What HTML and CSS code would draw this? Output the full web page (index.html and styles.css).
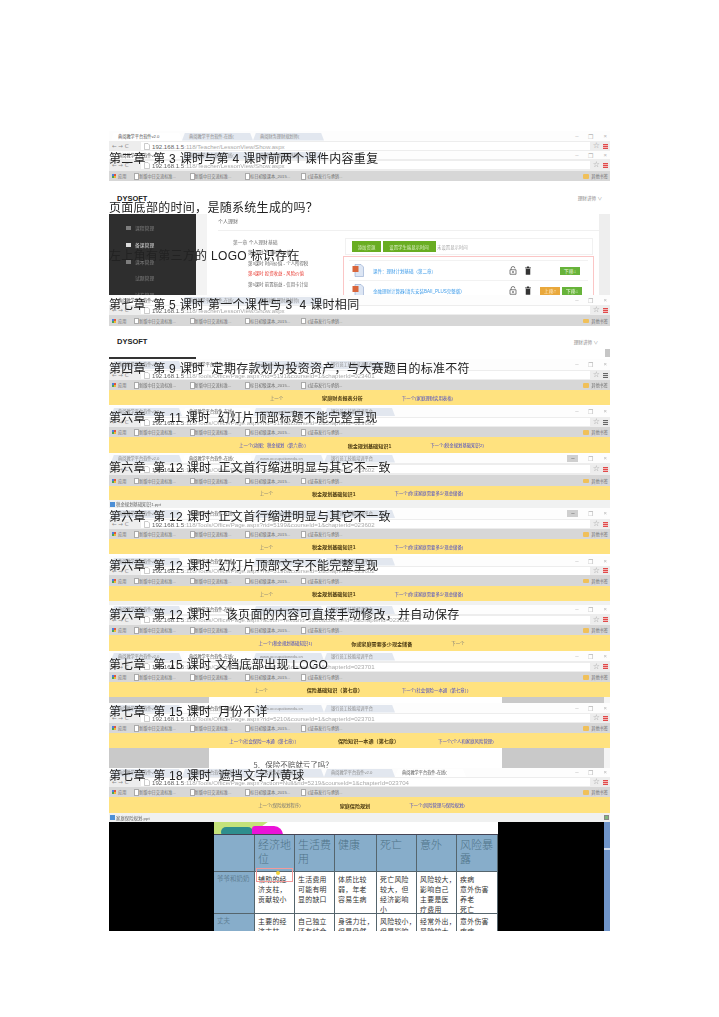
FILE: index.html
```html
<!DOCTYPE html>
<html lang="zh-CN">
<head>
<meta charset="utf-8">
<title>课件问题记录</title>
<link rel="stylesheet" href="styles.css">
</head>
<body>
<svg class="defs" aria-hidden="true">
  <symbol id="lock" viewBox="0 0 10 12"><path d="M2.5 5V3.2a2.5 2.5 0 0 1 5 0M1 5h8v6H1z" fill="none" stroke="#555" stroke-width="1"/><rect x="4" y="7" width="2" height="2" fill="#555"/></symbol>
  <symbol id="trash" viewBox="0 0 10 12"><path d="M1 2h8v1H1zM3.5 0.5h3V2h-3zM2 3.5h6V11.5H2z" fill="#333"/></symbol>
  <symbol id="ppt" viewBox="0 0 12 13"><path d="M3 .5h6l2.5 2.5v9.5H3z" fill="#dde6f4" stroke="#8fa6cc" stroke-width=".6"/><rect x=".5" y="2" width="6" height="6" fill="#d9663c"/></symbol>
  <symbol id="file" viewBox="0 0 6 7"><path d="M.5.5h3.5l1.500 1.500v4.500H.5z" fill="#fff" stroke="#aaa" stroke-width=".6"/></symbol>
</svg>
<main class="sheet">
  <div class="shots">

    <section class="tabs">
      <span class="tab on">典阅教学平台软件v2.0</span><span class="tab">典阅教学平台软件-在线(</span><span class="tab">典阅财务理财规划师(</span>
      <span class="winbtns"><i>–</i><i>❐</i><i>×</i></span>
    </section>
    <section class="url"><span class="arrows">← → C</span><span class="field"><svg class="doc"><use href="#file"/></svg><b>192.168.1.5</b>:118/Teacher/LessonView/Show.aspx</span><span class="star">☆</span><span class="menu"></span></section>

    <section class="tabs t8">
      <span class="tab on">典阅教学平台软件v2.0</span><span class="tab">典阅教学平台软件-在线(</span><span class="tab">典阅财务理财规划师(</span>
      <span class="winbtns"><i>–</i><i>❐</i><i>×</i></span>
    </section>
    <section class="url u12"><span class="arrows">← → C</span><span class="field"><svg class="doc"><use href="#file"/></svg><b>192.168.1.5</b>:118/Teacher/LessonView/Show.aspx</span><span class="star">☆</span><span class="menu"></span></section>
    <section class="marks"><span class="apps"></span><span class="apptxt">应用</span><span class="mk">新版中日交流标准...</span><span class="mk">新版中日交流标准...</span><span class="mk">标日初级课本_2015...</span><span class="mk">《证券发行与承销...</span><span class="folder">其他书签</span></section>

    <header class="brand b33"><strong>DYSOFT</strong><span>理财讲师 ∨</span></header>

    <section class="panel">
      <nav class="side">
        <p><i class="ico"></i>课程管理</p>
        <p class="cur"><i class="ico"></i>备课管理</p>
        <p><i class="ico"></i>课本管理</p>
        <p class="sub">试题管理</p>
        <p class="sub">试卷管理</p>
      </nav>
      <div class="gut"></div>
      <div class="work">
        <h2>个人理财</h2>
        <div class="cols">
          <ul class="tree">
            <li class="ch">第一章 个人理财基础</li>
            <li>第2课时 货币时间价值</li>
            <li>第3课时 时间价值 - 个人所得税</li>
            <li class="red">第4课时 投资收益 - 风险价值</li>
            <li>第5课时 前置损益 - 信用卡计息</li>
          </ul>
          <div class="res">
            <div class="acts"><button class="bt1">添加资源</button><button class="bt2">设置学生端显示时间</button><em>未设置显示时间</em></div>
            <div class="redbox">
              <div class="row"><svg class="pi"><use href="#ppt"/></svg><a>课件：理财计划基础（第二章）</a><span class="ops"><svg><use href="#lock"/></svg><svg><use href="#trash"/></svg></span><span class="spot"></span><span class="gb">下移↓</span></div>
              <div class="row"><svg class="pi"><use href="#ppt"/></svg><a>金融理财计算器(请先安装BAII_PLUS完整版)</a><span class="ops"><svg><use href="#lock"/></svg><svg><use href="#trash"/></svg></span><span class="ob">上移↑</span><span class="gb">下移↓</span></div>
            </div>
          </div>
        </div>
      </div>
      <div class="gut gr"></div>
    </section>

    <section class="tabs">
      <span class="tab on">典阅教学平台软件v2.0</span><span class="tab">典阅教学平台软件-在线(</span><span class="tab">典阅财务理财规划师(</span>
      <span class="winbtns"><i>–</i><i>❐</i><i>×</i></span>
    </section>
    <section class="url"><span class="arrows">← → C</span><span class="field"><svg class="doc"><use href="#file"/></svg><b>192.168.1.5</b>:118/Teacher/LessonView/Show.aspx</span><span class="star">☆</span><span class="menu"></span></section>
    <section class="marks m11"><span class="apps"></span><span class="apptxt">应用</span><span class="mk">新版中日交流标准...</span><span class="mk">新版中日交流标准...</span><span class="mk">标日初级课本_2015...</span><span class="mk">《证券发行与承销...</span><span class="folder">其他书签</span></section>

    <header class="brand b31 scroll"><strong>DYSOFT</strong><span>理财讲师 ∨</span><i class="thumb"></i></header>
    <div class="darkline"></div>

    <section class="tabs t11">
      <span class="tab">典阅教学平台软件v2.0</span><span class="tab on">典阅教学平台软件-在线(</span><span class="tab">www.occupationedu.cn</span><span class="tab">银行员工技能培训平台</span>
      <span class="winbtns"><i>–</i><i>❐</i><i>×</i></span>
    </section>
    <section class="url"><span class="arrows">← → C</span><span class="field"><svg class="doc"><use href="#file"/></svg><b>192.168.1.5</b>:118/Tools/Office/Page.aspx?rid=5191&amp;courseId=1&amp;chapterId=023401</span><span class="star">☆</span><span class="menu grey"></span></section>
    <section class="marks"><span class="apps"></span><span class="apptxt">应用</span><span class="mk">新版中日交流标准...</span><span class="mk">新版中日交流标准...</span><span class="mk">标日初级课本_2015...</span><span class="mk">《证券发行与承销...</span><span class="folder">其他书签</span></section>
    <section class="nav"><a>上一个</a><b>家庭财务报表分析</b><a class="next">下一个(家庭理财实用表格)</a></section>
    <div class="slit"></div>

    <section class="tabs t11">
      <span class="tab">典阅教学平台软件v2.0</span><span class="tab on">典阅教学平台软件-在线(</span><span class="tab">www.occupationedu.cn</span><span class="tab">银行员工技能培训平台</span>
      <span class="winbtns"><i>–</i><i>❐</i><i>×</i></span>
    </section>
    <section class="url"><span class="arrows">← → C</span><span class="field"><svg class="doc"><use href="#file"/></svg><b>192.168.1.5</b>:118/Tools/Office/Page.aspx?rid=5196&amp;courseId=1&amp;chapterId=023601</span><span class="star">☆</span><span class="menu grey"></span></section>
    <section class="marks"><span class="apps"></span><span class="apptxt">应用</span><span class="mk">新版中日交流标准...</span><span class="mk">新版中日交流标准...</span><span class="mk">标日初级课本_2015...</span><span class="mk">《证券发行与承销...</span><span class="folder">其他书签</span></section>
    <section class="nav n16"><a class="next">上一个(动图：税金规划（第六章））</a><b>税金规划基础知识1</b><a class="next">下一个(税金规划基础知识2)</a></section>

    <section class="tabs">
      <span class="tab">典阅教学平台软件v2.0</span><span class="tab on">典阅教学平台软件-在线(</span><span class="tab">www.occupationedu.cn</span><span class="tab">银行员工技能培训平台</span>
      <span class="winbtns dark"><i>–</i><i>❐</i><i>×</i></span>
    </section>
    <section class="url u12"><span class="arrows">← → C</span><span class="field"><svg class="doc"><use href="#file"/></svg><b>192.168.1.5</b>:118/Tools/Office/Page.aspx?rid=5197&amp;courseId=1&amp;chapterId=023602</span><span class="star">☆</span><span class="menu"></span></section>
    <section class="marks m11"><span class="apps"></span><span class="apptxt">应用</span><span class="mk">新版中日交流标准...</span><span class="mk">新版中日交流标准...</span><span class="mk">标日初级课本_2015...</span><span class="mk">《证券发行与承销...</span><span class="folder">其他书签</span></section>
    <section class="nav n14"><a>上一个</a><b>税金规划基础知识1</b><a class="next">下一个(你或家庭需要多少现金储备)</a></section>
    <section class="filebar"><i class="pp"></i>税金规划基础知识1.ppt</section>

    <section class="tabs t11">
      <span class="tab">典阅教学平台软件v2.0</span><span class="tab on">典阅教学平台软件-在线(</span><span class="tab">www.occupationedu.cn</span><span class="tab">银行员工技能培训平台</span>
      <span class="winbtns dark"><i>–</i><i>❐</i><i>×</i></span>
    </section>
    <section class="url"><span class="arrows">← → C</span><span class="field"><svg class="doc"><use href="#file"/></svg><b>192.168.1.5</b>:118/Tools/Office/Page.aspx?rid=5199&amp;courseId=1&amp;chapterId=023602</span><span class="star">☆</span><span class="menu"></span></section>
    <section class="marks"><span class="apps"></span><span class="apptxt">应用</span><span class="mk">新版中日交流标准...</span><span class="mk">新版中日交流标准...</span><span class="mk">标日初级课本_2015...</span><span class="mk">《证券发行与承销...</span><span class="folder">其他书签</span></section>
    <section class="nav"><a>上一个</a><b>税金规划基础知识1</b><a class="next">下一个(你或家庭需要多少现金储备)</a></section>
    <div class="slit s2"></div>

    <section class="tabs">
      <span class="tab">典阅教学平台软件v2.0</span><span class="tab on">典阅教学平台软件-在线(</span><span class="tab">www.occupationedu.cn</span><span class="tab">银行员工技能培训平台</span>
      <span class="winbtns"><i>–</i><i>❐</i><i>×</i></span>
    </section>
    <section class="url u9"><span class="arrows">← → C</span><span class="field"><svg class="doc"><use href="#file"/></svg><b>192.168.1.5</b>:118/Tools/Office/Page.aspx?rid=5198&amp;courseId=1&amp;chapterId=023602</span><span class="star">☆</span><span class="menu"></span></section>
    <section class="marks m11"><span class="apps"></span><span class="apptxt">应用</span><span class="mk">新版中日交流标准...</span><span class="mk">新版中日交流标准...</span><span class="mk">标日初级课本_2015...</span><span class="mk">《证券发行与承销...</span><span class="folder">其他书签</span></section>
    <section class="nav"><a>上一个</a><b>税金规划基础知识1</b><a class="next">下一个(你或家庭需要多少现金储备)</a></section>
    <section class="filebar f4"></section>

    <section class="tabs t9">
      <span class="tab">典阅教学平台软件v2.0</span><span class="tab on">典阅教学平台软件-在线(</span><span class="tab">www.occupationedu.cn</span><span class="tab">银行员工技能培训平台</span>
      <span class="winbtns"><i>–</i><i>❐</i><i>×</i></span>
    </section>
    <section class="url u11"><span class="arrows">← → C</span><span class="field"><svg class="doc"><use href="#file"/></svg><b>192.168.1.5</b>:118/Tools/Office/Page.aspx?action=Text&amp;rid=5200&amp;courseId=1&amp;chapterId=023602</span><span class="star">☆</span><span class="menu"></span></section>
    <section class="marks"><span class="apps"></span><span class="apptxt">应用</span><span class="mk">新版中日交流标准...</span><span class="mk">新版中日交流标准...</span><span class="mk">标日初级课本_2015...</span><span class="mk">《证券发行与承销...</span><span class="folder">其他书签</span></section>
    <section class="nav n16"><a class="next">上一个(税金规划基础知识1)</a><b>你或家庭需要多少现金储备</b><a>下一个</a></section>

    <section class="tabs">
      <span class="tab">典阅教学平台软件v2.0</span><span class="tab on">典阅教学平台软件-在线(</span><span class="tab">www.occupationedu.cn</span><span class="tab">银行员工技能培训平台</span>
      <span class="winbtns"><i>–</i><i>❐</i><i>×</i></span>
    </section>
    <section class="url u11"><span class="arrows">← → C</span><span class="field"><svg class="doc"><use href="#file"/></svg><b>192.168.1.5</b>:118/Tools/Office/Page.aspx?rid=5206&amp;courseId=1&amp;chapterId=023701</span><span class="star">☆</span><span class="menu"></span></section>
    <section class="marks"><span class="apps"></span><span class="apptxt">应用</span><span class="mk">新版中日交流标准...</span><span class="mk">新版中日交流标准...</span><span class="mk">标日初级课本_2015...</span><span class="mk">《证券发行与承销...</span><span class="folder">其他书签</span></section>
    <section class="nav"><a>上一个</a><b>保险基础知识（第七章）</b><a class="next">下一个(社会保险一本通（第七章）)</a></section>
    <div class="gutter g6"><div class="leaf"></div></div>

    <section class="tabs">
      <span class="tab">典阅教学平台软件v2.0</span><span class="tab on">典阅教学平台软件-在线(</span><span class="tab">www.occupationedu.cn</span><span class="tab">银行员工技能培训平台</span>
      <span class="winbtns"><i>–</i><i>❐</i><i>×</i></span>
    </section>
    <section class="url"><span class="arrows">← → C</span><span class="field"><svg class="doc"><use href="#file"/></svg><b>192.168.1.5</b>:118/Tools/Office/Page.aspx?rid=5210&amp;courseId=1&amp;chapterId=023701</span><span class="star">☆</span><span class="menu"></span></section>
    <section class="marks"><span class="apps"></span><span class="apptxt">应用</span><span class="mk">新版中日交流标准...</span><span class="mk">新版中日交流标准...</span><span class="mk">标日初级课本_2015...</span><span class="mk">《证券发行与承销...</span><span class="folder">其他书签</span></section>
    <section class="nav"><a class="next">上一个(社会保险一本通（第七章））</a><b>保险知识一本通（第七章）</b><a class="next">下一个(个人和家庭风险管理)</a></section>
    <div class="gutter g20"><div class="leaf"><p>5、保险不赔就亏了吗？</p></div></div>

    <section class="tabs t9">
      <span class="tab">典阅教学平台软件v2.0</span><span class="tab">典阅教学平台软件-在线(</span><span class="tab">综合业务实训系统</span><span class="tab">典阅教学平台软件v2.0</span><span class="tab on">典阅教学平台软件-在线(</span>
      <span class="winbtns"><i>–</i><i>❐</i><i>×</i></span>
    </section>
    <section class="url"><span class="arrows">← → C</span><span class="field"><svg class="doc"><use href="#file"/></svg><b>192.168.1.5</b>:118/Tools/Office/Page.aspx?action=Null&amp;rid=5219&amp;courseId=1&amp;chapterId=023704</span><span class="star">☆</span><span class="menu"></span></section>
    <section class="marks"><span class="apps"></span><span class="apptxt">应用</span><span class="mk">新版中日交流标准...</span><span class="mk">新版中日交流标准...</span><span class="mk">标日初级课本_2015...</span><span class="mk">《证券发行与承销...</span><span class="folder">其他书签</span></section>
    <section class="nav n16"><a>上一个(保险规划程序)</a><b>家庭保险规划</b><a class="next">下一个(风险管理与保险规划)</a></section>
    <section class="filebar f9"><i class="pp"></i>家庭保险规划.ppt<i class="ok"></i></section>

    <section class="slide">
      <div class="stage">
        <div class="logo"><i class="lime"></i><i class="teal"></i><i class="pink"></i></div>
        <div class="sheet-table">
          <div class="hd"></div><div class="hd">经济地位</div><div class="hd">生活费用</div><div class="hd">健康</div><div class="hd">死亡</div><div class="hd">意外</div><div class="hd">风险暴露</div>
          <div class="who">爷爷和奶奶</div><div class="cell">辅助的经<br>济支柱，<br>贡献较小</div><div class="cell">生活费用<br>可能有明<br>显的缺口</div><div class="cell">体质比较<br>弱，年老<br>容易生病</div><div class="cell">死亡风险<br>较大，但<br>经济影响<br>小</div><div class="cell">风险较大，<br>影响自己<br>主要是医<br>疗费用</div><div class="cell">疾病<br>意外伤害<br>养老<br>死亡</div>
          <div class="who">丈夫</div><div class="cell">主要的经<br>济支柱，</div><div class="cell">自己独立<br>还有结余，</div><div class="cell">身强力壮，<br>但是仍然</div><div class="cell">风险较小，<br>但是影响</div><div class="cell">经常外出，<br>风险较大</div><div class="cell">意外伤害<br>疾病</div>
        </div>
        <div class="callout"></div>
        <div class="ball"></div>
      </div>
      <div class="vbar"><i></i></div>
    </section>
  </div>

  <div class="notes">
    <p>第二章  第 3 课时与第 4 课时前两个课件内容重复</p>
    <p>页面底部的时间，是随系统生成的吗？</p>
    <p class="tight">左上角有第三方的 LOGO 标识存在</p>
    <p>第七章  第 5 课时 第一个课件与 3  4 课时相同</p>
    <p class="wide">第四章  第 9 课时  定期存款划为投资资产，与大赛题目的标准不符</p>
    <p>第六章  第 11 课时  幻灯片顶部标题不能完整呈现</p>
    <p>第六章  第 12 课时  正文首行缩进明显与其它不一致</p>
    <p>第六章  第 12 课时  正文首行缩进明显与其它不一致</p>
    <p>第六章  第 12 课时  幻灯片顶部文字不能完整呈现</p>
    <p>第六章  第 12 课时    该页面的内容可直接手动修改，并自动保存</p>
    <p>第七章  第 15 课时 文档底部出现 LOGO</p>
    <p class="tight">第七章  第 15 课时  月份不详</p>
    <p class="wide">第七章  第 18 课时  遮挡文字小黄球</p>
  </div>
</main>
</body>
</html>
```
FILE: styles.css
```css
* { box-sizing: border-box; }
html, body { margin: 0; padding: 0; background: #fff; }
body { font-family: "Liberation Sans", "Noto Sans CJK SC", sans-serif; height: 1017px; overflow: hidden; }
.defs { width: 0; height: 0; position: absolute; }
p, h2, ul { margin: 0; padding: 0; }
i, em { font-style: normal; }

.sheet { position: relative; width: 501px; margin: 131px 0 0 109px; }
.shots { display: flex; flex-direction: column; filter: blur(.6px); color: #777; }

/* browser chrome */
.tabs { display: flex; align-items: center; height: 10px; padding-left: 2px; background: #fdfdfd; font-size: 4.2px; overflow: hidden; }
.t8 { height: 8px; }
.t9 { height: 9px; }
.t11 { height: 11px; }
.tab { flex: 0 0 71px; height: 8px; line-height: 8px; padding-left: 7px; background: #e2e7ef; color: #8c8c8c; white-space: nowrap; overflow: hidden; clip-path: polygon(3px 0, calc(100% - 3px) 0, 100% 100%, 0 100%); margin-top: 1px; }
.tab.on { background: #fff; color: #555; }
.winbtns { margin-left: auto; display: flex; gap: 10px; padding-right: 3px; font-size: 6px; color: #b5b5b5; }
.winbtns.dark i:first-child { background: #cfcfcf; padding: 0 4px; color: #555; }

.url { display: flex; align-items: center; height: 10px; padding: 0 2px 0 3px; background: #ededed; font-size: 6.1px; color: #aaa; white-space: nowrap; }
.u9 { height: 9px; }
.u11 { height: 11px; }
.u12 { height: 12px; }
.arrows { width: 29px; font-family: "DejaVu Sans", sans-serif; font-size: 5.5px; color: #8a8a8a; }
.field { flex: 1; display: flex; align-items: center; height: 8px; background: #fff; padding-left: 3px; }
.field b { font-weight: 400; color: #5f5f5f; }
.doc { width: 6px; height: 7px; margin-right: 2px; }
.star { font-family: "DejaVu Sans", sans-serif; font-size: 8px; line-height: 8px; color: #999; margin: 0 3px; }
.menu { width: 5px; height: 5px; background: repeating-linear-gradient(#e04a4a 0 1px, #f3b5b5 1px 2px); }
.menu.grey { background: repeating-linear-gradient(#666 0 1px, #ddd 1px 2px); }

.marks { position: relative; display: flex; align-items: center; height: 10px; padding-left: 3px; background: #d7d7d7; font-size: 4.200px; color: #6e6e6e; white-space: nowrap; }
.m11 { height: 11px; }
.apps { width: 4px; height: 4px; margin-right: 2px; background: conic-gradient(#e2553f 25%, #f2b632 0 50%, #4aa45a 0 75%, #4a7fe0 0); }
.apptxt { width: 15px; }
.mk { width: 55.500px; padding-left: 6px; position: relative; }
.mk::before { content: ""; position: absolute; left: 1px; top: 0; width: 3px; height: 4.500px; background: #fff; border: .5px solid #aaa; }
.folder { margin-left: auto; padding-right: 2px; position: relative; }
.folder::before { content: ""; display: inline-block; width: 6px; height: 4.500px; margin-right: 2px; background: #f0c05a; border-radius: 1px; vertical-align: -.5px; }

/* yellow lesson navigation */
.nav { display: flex; align-items: center; justify-content: center; gap: 39px; height: 15px; padding-left: 4px; background: #ffe27f; font-size: 4.400px; color: #777; white-space: nowrap; }
.n14 { height: 14px; }
.n16 { height: 16px; }
.nav .next { color: #4447c8; }
.nav b { font-size: 5.100px; color: #4b3a12; }
.slit { height: 1px; background: #fff; }
.s2 { height: 2px; }

.filebar { display: flex; align-items: center; height: 8px; padding-left: 1px; background: #f0f1f1; font-size: 4.400px; color: #666; }
.f4 { height: 4px; }
.f9 { height: 9px; }
.pp { width: 5px; height: 5px; margin-right: 1px; background: #4d8fd6; }
.ok { margin-left: auto; margin-right: 1px; width: 5px; height: 5px; background: #7fb77f; border: .5px solid #888; }

/* scroll gutters */
.gutter { display: flex; justify-content: center; background: #c9c9c9; padding-right: 3px; border-right: 6px solid #f4f4f4; overflow: hidden; }
.g6 { height: 6px; }
.g20 { height: 20px; }
.leaf { width: 293px; background: #fff; font-family: "Noto Sans CJK SC", serif; font-size: 7.500px; line-height: 11px; color: #555; padding: 11px 0 0 45px; white-space: nowrap; }

/* first screenshot */
.brand { position: relative; display: flex; align-items: center; justify-content: space-between; padding: 0 8px; background: #fff; }
.b33 { height: 33px; padding-top: 1px; }
.b31 { height: 31px; padding-right: 12px; }
.brand strong { font-size: 7.500px; color: #222; letter-spacing: 0; }
.brand span { font-size: 4.600px; color: #888; }
.thumb { position: absolute; right: 0; bottom: 0; width: 5px; height: 8px; background: #c6c6c6; }
.darkline { width: 87px; height: 2px; background: #333; }

.panel { display: flex; height: 81px; overflow: hidden; background: #fff; }
.side { flex: 0 0 87px; background: #2e2e2e; padding: 12px 0 0 17px; display: flex; flex-direction: column; gap: 10.800px; font-size: 4.800px; line-height: 6px; color: #7d7d7d; }
.side .cur { color: #ddd; }
.side .sub { padding-left: 9px; }
.ico { display: inline-block; width: 5px; height: 4px; margin-right: 4px; background: currentColor; }
.gut { flex: 0 0 11px; background: #f3f3f3; }
.gut.gr { background: #eeeeee; }
.work { flex: 1; padding: 4px 0 0 11px; min-width: 0; }
.work h2 { font-size: 5px; font-weight: 400; color: #666; padding-bottom: 6px; border-bottom: 1px solid #f0f0f0; margin-bottom: 7px; line-height: 6px; }
.cols { display: flex; }
.tree { flex: 0 0 125px; list-style: none; font-size: 4.400px; color: #666; line-height: 10.400px; padding: 0 0 0 30px; white-space: nowrap; }
.tree .ch { font-size: 4.800px; margin-left: -15px; color: #777; }
.tree .red { color: #e8382f; }
.res { flex: 1; min-width: 0; }
.acts { display: flex; align-items: center; gap: 1.500px; height: 17px; padding-left: 6px; margin: 0 6px 0 2px; border: 1px solid #f1f1f1; font-size: 4.400px; color: #aaa; }
.acts button { height: 11px; padding: 0; border: 0; background: #69ad22; color: #dff0c8; font: inherit; }
.bt1 { width: 29px; }
.bt2 { width: 53px; }
.redbox { margin: 1px 5px 0 0; border: 1px solid #fbc6c6; border-bottom: 0; padding: 3px 5px 0; height: 60px; }
.row { display: flex; align-items: center; height: 20px; border-top: 1px solid #f2f2f2; font-size: 4.500px; }
.row a { color: #3d9be9; margin-left: 9px; width: 136px; white-space: nowrap; }
.pi { width: 12px; height: 13px; margin-left: 3px; }
.ops { display: flex; gap: 7px; margin-right: 6px; }
.ops svg { width: 8px; height: 9px; }
.spot { width: 20px; }
.gb, .ob { width: 20px; height: 8px; line-height: 8px; text-align: center; color: #e4f4d5; background: #67b33a; font-size: 5px; margin-left: 2px; }
.ob { background: #e9a83c; color: #ffe7bc; }

/* slide with table */
.slide { display: flex; height: 109px; background: #000; overflow: hidden; }
.stage { position: relative; flex: 0 0 495px; padding-left: 105px; }
.logo { position: relative; width: 284px; height: 12px; background: #fff; overflow: hidden; }
.logo i { position: absolute; display: block; }
.lime { left: 0; top: -6px; width: 62px; height: 18px; background: #c4e27a; clip-path: polygon(0 0, 100% 0, 60% 100%, 0 100%); }
.teal { left: 7px; top: 5px; width: 32px; height: 10px; background: #2e8e8e; border-radius: 5px; }
.pink { left: 38px; top: 4px; width: 31px; height: 10px; background: #ea12d8; border-radius: 3px 9px 0 0; }
.sheet-table { display: grid; grid-template-columns: 41px 40px 40px 42px 40px 40px 41px; grid-template-rows: 37px 42px 20px; width: 284px; height: 99px; background: #fff; border-top: 1px solid #445; font-family: "Noto Sans CJK SC", serif; }
.sheet-table > div { border-right: 1px solid #55656d; border-bottom: 1px solid #55656d; }
.hd { background: #87adca; color: #4f7388; font-size: 11px; line-height: 14px; font-weight: 300; padding: 2px 2px 0 3px; }
.who { background: #87adca; color: #5f7f95; font-size: 6.500px; line-height: 9px; padding: 2px 3px; }
.cell { background: #fff; color: #333; font-size: 6.900px; line-height: 10px; letter-spacing: .3px; padding: 2px 0 0 3px; white-space: nowrap; overflow: hidden; }
.callout { position: absolute; left: 147px; top: 46px; width: 37px; height: 14px; border: 1px solid #f39a9a; }
.ball { position: absolute; left: 167px; top: 49px; width: 4px; height: 4px; border-radius: 50%; background: #f0d23c; }
.vbar { position: relative; flex: 0 0 6px; background: #6f94c9; }
.vbar i { position: absolute; top: 26px; left: 0; right: 0; height: 2px; background: #d6e0f0; }

/* notes over the screenshots */
.notes { position: absolute; left: 0; top: 20px; display: flex; flex-direction: column; gap: 33.250px; font-family: "Liberation Sans", "Noto Sans CJK SC", sans-serif; font-size: 12px; line-height: 16px; letter-spacing: .3px; color: #222; white-space: pre; filter: blur(.3px); }
.notes .tight { margin-top: -2px; }
.notes .wide { margin-top: 15px; }
```
